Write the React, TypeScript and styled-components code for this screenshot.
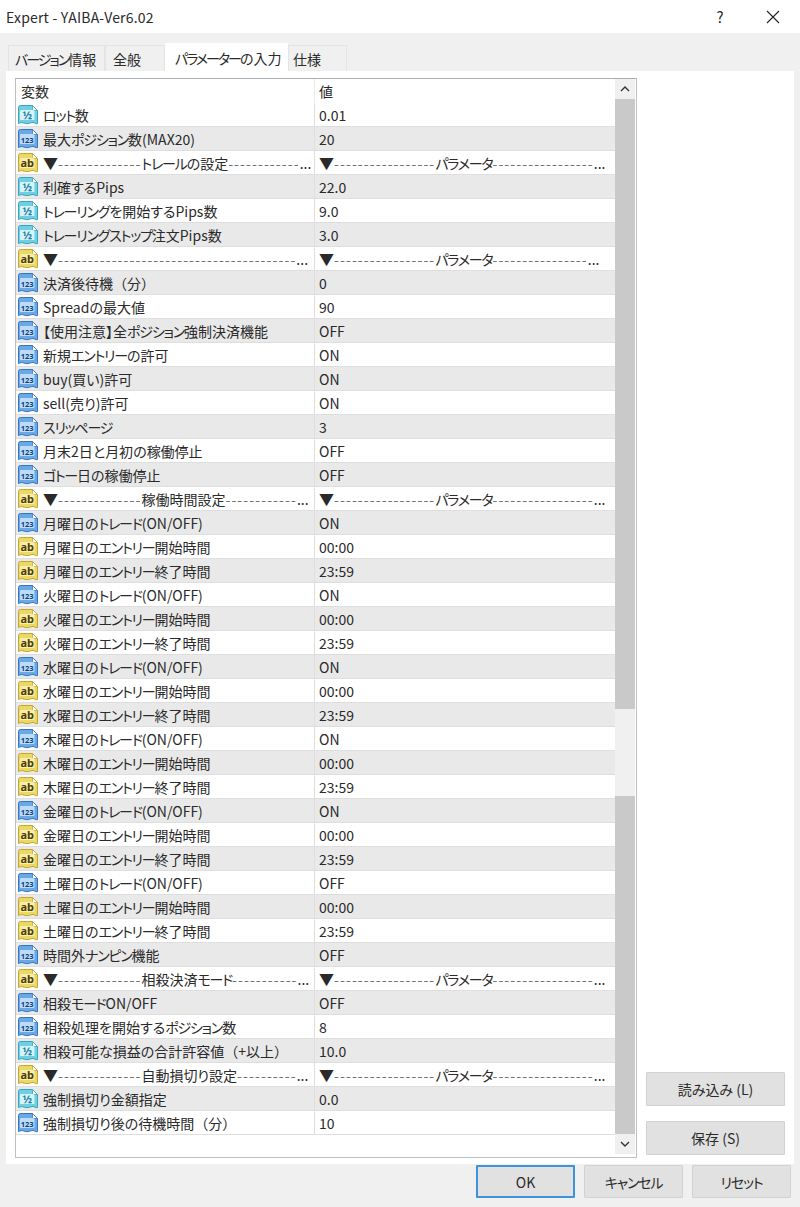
import React from 'react';
import styled, { createGlobalStyle } from 'styled-components';

const GlobalStyle = createGlobalStyle`
  html, body { margin: 0; padding: 0; background: #f0f0f0; }
  body {
    font-family: "Noto Sans CJK JP", "Noto Sans", sans-serif;
    color: #2a2a2a;
  }
`;

type Kind = 'double' | 'int' | 'str';
type Section = { before: number; label?: string; after: number };
type Param = { kind: Kind; name: string | Section; value: string | Section };

const p = (kind: Kind, name: string, value: string): Param => ({ kind, name, value });
const section = (name: Section, value: Section = { before: 17, label: 'パラメータ', after: 17 }): Param => ({
  kind: 'str',
  name,
  value,
});

const dayRows = (day: string, on: string): Param[] => [
  p('int', `${day}曜日のトレード(ON/OFF)`, on),
  p('str', `${day}曜日のエントリー開始時間`, '00:00'),
  p('str', `${day}曜日のエントリー終了時間`, '23:59'),
];

const params: Param[] = [
  p('double', 'ロット数', '0.01'),
  p('int', '最大ポジション数(MAX20)', '20'),
  section({ before: 14, label: 'トレールの設定', after: 12 }),
  p('double', '利確するPips', '22.0'),
  p('double', 'トレーリングを開始するPips数', '9.0'),
  p('double', 'トレーリングストップ注文Pips数', '3.0'),
  section({ before: 40, after: 0 }, { before: 17, label: 'パラメータ', after: 16 }),
  p('int', '決済後待機（分）', '0'),
  p('int', 'Spreadの最大値', '90'),
  p('int', '【使用注意】全ポジション強制決済機能', 'OFF'),
  p('int', '新規エントリーの許可', 'ON'),
  p('int', 'buy(買い)許可', 'ON'),
  p('int', 'sell(売り)許可', 'ON'),
  p('int', 'スリッページ', '3'),
  p('int', '月末2日と月初の稼働停止', 'OFF'),
  p('int', 'ゴトー日の稼働停止', 'OFF'),
  section({ before: 14, label: '稼働時間設定', after: 12 }),
  ...dayRows('月', 'ON'),
  ...dayRows('火', 'ON'),
  ...dayRows('水', 'ON'),
  ...dayRows('木', 'ON'),
  ...dayRows('金', 'ON'),
  ...dayRows('土', 'OFF'),
  p('int', '時間外ナンピン機能', 'OFF'),
  section({ before: 14, label: '相殺決済モード', after: 11 }),
  p('int', '相殺モードON/OFF', 'OFF'),
  p('int', '相殺処理を開始するポジション数', '8'),
  p('double', '相殺可能な損益の合計許容値（+以上）', '10.0'),
  section({ before: 14, label: '自動損切り設定', after: 10 }),
  p('double', '強制損切り金額指定', '0.0'),
  p('int', '強制損切り後の待機時間（分）', '10'),
];

// the reference font sets kana much narrower than its kanji
const Kana = styled.span`
  font-feature-settings: "palt";
  letter-spacing: -1.2px;
`;
const Proportional = styled.span`
  font-feature-settings: "palt";
`;

const Window = styled.div`
  width: 800px;
  height: 1207px;
  display: flex;
  flex-direction: column;
  overflow: hidden;
  background: #f0f0f0;
`;

const TitleBar = styled.header`
  height: 33px;
  flex: none;
  display: flex;
  align-items: center;
  background: #fff;
  padding-left: 6px;
  font-size: 14px;
`;
const TitleText = styled.span`
  flex: 1;
  letter-spacing: 0.2px;
`;
const HelpIcon = styled.span`
  width: 20px;
  margin-right: 36px;
  text-align: center;
  font-size: 15px;
`;
const CloseIcon = styled.svg`
  width: 14px;
  height: 14px;
  margin-right: 20px;
`;

const Tabs = styled.nav`
  height: 28px;
  flex: none;
  margin-top: 10px;
  padding-left: 8px;
  display: flex;
  align-items: flex-end;
`;
const Tab = styled.div<{ $active?: boolean; $w: number; $pad: number }>`
  width: ${({ $w }) => $w}px;
  height: ${({ $active }) => ($active ? 28 : 26)}px;
  box-sizing: border-box;
  display: flex;
  align-items: center;
  padding-left: ${({ $pad }) => $pad}px;
  background: ${({ $active }) => ($active ? '#fff' : '#f0f0f0')};
  border: 1px solid ${({ $active }) => ($active ? '#fff' : '#e4e4e4')};
  border-bottom: none;
  font-size: 14px;
  white-space: nowrap;
  ${Kana} { letter-spacing: -2px; }
`;

const Panel = styled.section`
  width: 788px;
  height: 1093px;
  flex: none;
  box-sizing: border-box;
  margin-left: 6px;
  padding: 7px 9px 6px;
  display: flex;
  background: #fff;
`;

const ListBox = styled.div`
  width: 622px;
  height: 1080px;
  flex: none;
  box-sizing: border-box;
  border: 1px solid #bcc0c8;
  border-top-color: #a9adb5;
  display: flex;
`;
const Table = styled.div`
  width: 599px;
  flex: none;
`;
const HeaderRow = styled.div`
  height: 24px;
  display: grid;
  grid-template-columns: 298px 1fr;
  font-size: 14px;
`;
const HeaderCell = styled.div<{ $value?: boolean }>`
  display: flex;
  align-items: center;
  padding-left: ${({ $value }) => ($value ? 4 : 5)}px;
  border-left: ${({ $value }) => ($value ? '1px solid #ececec' : 'none')};
`;
const Row = styled.div<{ $even: boolean }>`
  height: 24px;
  box-sizing: border-box;
  display: grid;
  grid-template-columns: 298px 1fr;
  background: ${({ $even }) => ($even ? '#e9e9e9' : '#fff')};
  border-bottom: 1px solid #dedede;
  font-size: 14px;
`;
const NameCell = styled.div`
  display: flex;
  align-items: center;
  gap: 5px;
  padding-left: 2px;
  white-space: nowrap;
  overflow: hidden;
`;
const ValueCell = styled.div`
  display: flex;
  align-items: center;
  padding-left: 4px;
  border-left: 1px solid #dedede;
  white-space: nowrap;
  overflow: hidden;
`;

const Marker = styled.span`
  font-size: 15px;
`;
const Dashes = styled.span`
  letter-spacing: 1.1px;
  color: #707070;
`;
const SectionLine = styled.span`
  display: inline-flex;
  align-items: center;
`;

const ScrollBar = styled.div`
  width: 20px;
  flex: none;
  display: flex;
  flex-direction: column;
`;
const ScrollButton = styled.div`
  height: 20px;
  flex: none;
  display: flex;
  align-items: center;
  justify-content: center;
  background: #f0f0f0;
`;
const ScrollThumb = styled.div<{ $h: number }>`
  height: ${({ $h }) => $h}px;
  flex: none;
  background: #c9c9c9;
`;
const ScrollGap = styled.div`
  height: 87px;
  flex: none;
  background: #f0f0f0;
`;

const SideColumn = styled.aside`
  flex: 1;
  display: flex;
  flex-direction: column;
  justify-content: flex-end;
  align-items: flex-end;
  gap: 15px;
  padding-bottom: 3px;
`;
const Button = styled.button<{ $w: number; $h: number; $default?: boolean }>`
  width: ${({ $w }) => $w}px;
  height: ${({ $h }) => $h}px;
  box-sizing: border-box;
  padding: 0;
  background: #e1e1e1;
  border: ${({ $default }) => ($default ? '2px solid #3f93dc' : '1px solid #d2d2d2')};
  border-radius: 1px;
  font-family: inherit;
  font-size: 14px;
  color: #2a2a2a;
`;

const Footer = styled.footer`
  flex: 1;
  display: flex;
  justify-content: flex-end;
  gap: 9px;
  padding: 1px 9px 0 0;
`;

const iconColors: Record<Kind, { fill: string; edge: string; inner: string; ink: string; label: string; size: number }> = {
  double: { fill: '#6fd0e2', edge: '#35a6c2', inner: '#d6f4f8', ink: '#1d7f9c', label: '½', size: 11 },
  int: { fill: '#6aa9e8', edge: '#3776bf', inner: '#bcdcf8', ink: '#123f78', label: '123', size: 7.5 },
  str: { fill: '#ecd964', edge: '#c4a733', inner: '#f8eeaa', ink: '#4f3f08', label: 'ab', size: 11 },
};

const FileSvg = styled.svg`
  width: 20px;
  height: 20px;
  flex: none;
`;

function ParamIcon({ kind }: { kind: Kind }) {
  const c = iconColors[kind];
  return (
    <FileSvg viewBox="0 0 20 20">
      <path
        d="M0.5 2.5 Q0.5 0.5 2.5 0.5 H14.5 L19.5 5.5 V18 Q19.5 19.5 18 18.5 Q15 16.5 12 18 Q9 19.5 6 18 Q3 16.8 0.5 18.5 Z"
        fill={c.fill}
        stroke={c.edge}
      />
      <path d="M14.5 0.5 V5.5 H19.5 Z" fill="#fff" stroke={c.edge} strokeWidth="0.8" />
      <rect x="2" y="5" width="14.5" height="10" rx="1" fill={c.inner} />
      <text
        x="9.2"
        y="13.8"
        textAnchor="middle"
        fontSize={c.size}
        fontWeight="700"
        fontFamily="'Noto Sans', sans-serif"
        fill={c.ink}
      >
        {c.label}
      </text>
    </FileSvg>
  );
}

function Label({ text }: { text: string }) {
  const parts = text.split(/([ァ-ヶー]+|[ぁ-ん【】]+)/);
  return (
    <span>
      {parts.map((part, i) => {
        if (i % 2 === 0) return part;
        return /[ァ-ヶー]/.test(part) ? <Kana key={i}>{part}</Kana> : <Proportional key={i}>{part}</Proportional>;
      })}
    </span>
  );
}

function CellText({ text }: { text: string | Section }) {
  if (typeof text === 'string') return <Label text={text} />;
  return (
    <SectionLine>
      <Marker>▼</Marker>
      <Dashes>{'-'.repeat(text.before)}</Dashes>
      {text.label && <Label text={text.label} />}
      <Dashes>{'-'.repeat(text.after)}</Dashes>
      ...
    </SectionLine>
  );
}

export default function App() {
  return (
    <Window>
      <GlobalStyle />
      <TitleBar>
        <TitleText>Expert - YAIBA-Ver6.02</TitleText>
        <HelpIcon>?</HelpIcon>
        <CloseIcon viewBox="0 0 14 14">
          <path d="M1 1 L13 13 M13 1 L1 13" stroke="#222" strokeWidth="1.1" fill="none" />
        </CloseIcon>
      </TitleBar>

      <Tabs>
        <Tab $w={97} $pad={6}><Label text="バージョン情報" /></Tab>
        <Tab $w={60} $pad={7}><Label text="全般" /></Tab>
        <Tab $w={123} $pad={9} $active><Label text="パラメーターの入力" /></Tab>
        <Tab $w={59} $pad={4}><Label text="仕様" /></Tab>
      </Tabs>

      <Panel>
        <ListBox>
          <Table>
            <HeaderRow>
              <HeaderCell>変数</HeaderCell>
              <HeaderCell $value>値</HeaderCell>
            </HeaderRow>
            {params.map(({ kind, name, value }, i) => (
              <Row key={i} $even={i % 2 === 1}>
                <NameCell>
                  <ParamIcon kind={kind} />
                  <CellText text={name} />
                </NameCell>
                <ValueCell>
                  <CellText text={value} />
                </ValueCell>
              </Row>
            ))}
          </Table>
          <ScrollBar>
            <ScrollButton>
              <svg width="10" height="6" viewBox="0 0 10 6">
                <path d="M1 5 L5 1 L9 5" stroke="#333" strokeWidth="1.4" fill="none" />
              </svg>
            </ScrollButton>
            <ScrollThumb $h={610} />
            <ScrollGap />
            <ScrollThumb $h={338} />
            <ScrollButton>
              <svg width="10" height="6" viewBox="0 0 10 6">
                <path d="M1 1 L5 5 L9 1" stroke="#333" strokeWidth="1.4" fill="none" />
              </svg>
            </ScrollButton>
          </ScrollBar>
        </ListBox>
        <SideColumn>
          <Button $w={139} $h={34}><Label text="読み込み (L)" /></Button>
          <Button $w={139} $h={34}>保存 (S)</Button>
        </SideColumn>
      </Panel>

      <Footer>
        <Button $w={99} $h={33} $default>OK</Button>
        <Button $w={99} $h={33}><Label text="キャンセル" /></Button>
        <Button $w={99} $h={33}><Label text="リセット" /></Button>
      </Footer>
    </Window>
  );
}
